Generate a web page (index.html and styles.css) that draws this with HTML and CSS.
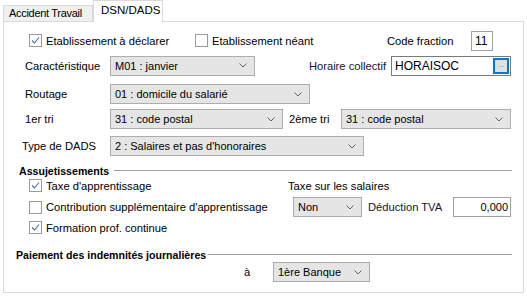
FILE: index.html
```html
<!DOCTYPE html>
<html lang="fr">
<head>
    <meta charset="UTF-8">
    <title>DSN/DADS</title>
    <link rel="stylesheet" href="styles.css">
</head>
<body>
    <div class="onglets">
        <div class="onglet">Accident Travail</div>
        <div class="onglet actif">DSN/DADS</div>
    </div>
    <div class="panneau">
        <div class="ligne l1">
            <div class="coche w166">
                <svg class="case" viewBox="0 0 13 13"><rect x="0.5" y="0.5" width="12" height="12" fill="#fff" stroke="#9a9a9a"/><path d="M3 6.5 L5.5 9 L10 3.5" fill="none" stroke="#3f6fb3" stroke-width="1.1"/></svg>
                <span>Etablissement à déclarer</span>
            </div>
            <div class="coche w192">
                <svg class="case" viewBox="0 0 13 13"><rect x="0.5" y="0.5" width="12" height="12" fill="#fff" stroke="#9a9a9a"/></svg>
                <span>Etablissement néant</span>
            </div>
            <div class="lib w84">Code fraction</div>
            <div class="champ fraction">11</div>
        </div>

        <div class="ligne l2">
            <div class="lib w85">Caractéristique</div>
            <div class="liste w145"><span>M01 : janvier</span><svg viewBox="0 0 8 5"><path d="M0.5 0.5 L4 4 L7.5 0.5" fill="none" stroke="#666"/></svg></div>
            <div class="lib droite w136 sombre">Horaire collectif</div>
            <div class="champ horaire"><span>HORAISOC</span><div class="btn-pts">...</div></div>
        </div>

        <div class="ligne l3">
            <div class="lib w85">Routage</div>
            <div class="liste w200"><span>01 : domicile du salarié</span><svg viewBox="0 0 8 5"><path d="M0.5 0.5 L4 4 L7.5 0.5" fill="none" stroke="#666"/></svg></div>
        </div>

        <div class="ligne l4">
            <div class="lib w85">1er tri</div>
            <div class="liste w173"><span>31 : code postal</span><svg viewBox="0 0 8 5"><path d="M0.5 0.5 L4 4 L7.5 0.5" fill="none" stroke="#666"/></svg></div>
            <div class="lib tri2">2ème tri</div>
            <div class="liste w170"><span>31 : code postal</span><svg viewBox="0 0 8 5"><path d="M0.5 0.5 L4 4 L7.5 0.5" fill="none" stroke="#666"/></svg></div>
        </div>

        <div class="ligne l5">
            <div class="lib w88">Type de DADS</div>
            <div class="liste w254"><span>2 : Salaires et pas d'honoraires</span><svg viewBox="0 0 8 5"><path d="M0.5 0.5 L4 4 L7.5 0.5" fill="none" stroke="#666"/></svg></div>
        </div>

        <div class="groupe g1">
            <span>Assujetissements</span>
            <div class="trait"></div>
        </div>

        <div class="ligne a1">
            <div class="coche w259">
                <svg class="case" viewBox="0 0 13 13"><rect x="0.5" y="0.5" width="12" height="12" fill="#fff" stroke="#9a9a9a"/><path d="M3 6.5 L5.5 9 L10 3.5" fill="none" stroke="#3f6fb3" stroke-width="1.1"/></svg>
                <span>Taxe d'apprentissage</span>
            </div>
            <div class="lib">Taxe sur les salaires</div>
        </div>

        <div class="ligne a2">
            <div class="coche w264">
                <svg class="case" viewBox="0 0 13 13"><rect x="0.5" y="0.5" width="12" height="12" fill="#fff" stroke="#9a9a9a"/></svg>
                <span>Contribution supplémentaire d'apprentissage</span>
            </div>
            <div class="liste w69"><span>Non</span><svg viewBox="0 0 8 5"><path d="M0.5 0.5 L4 4 L7.5 0.5" fill="none" stroke="#666"/></svg></div>
            <div class="lib tva sombre">Déduction TVA</div>
            <div class="champ montant">0,000</div>
        </div>

        <div class="ligne a3">
            <div class="coche">
                <svg class="case" viewBox="0 0 13 13"><rect x="0.5" y="0.5" width="12" height="12" fill="#fff" stroke="#9a9a9a"/><path d="M3 6.5 L5.5 9 L10 3.5" fill="none" stroke="#3f6fb3" stroke-width="1.1"/></svg>
                <span>Formation prof. continue</span>
            </div>
        </div>

        <div class="groupe g2">
            <span>Paiement des indemnités journalières</span>
            <div class="trait"></div>
        </div>

        <div class="ligne p1">
            <div class="lib w29">à</div>
            <div class="liste w97"><span>1ère Banque</span><svg viewBox="0 0 8 5"><path d="M0.5 0.5 L4 4 L7.5 0.5" fill="none" stroke="#666"/></svg></div>
        </div>
    </div>
</body>
</html>
```

FILE: styles.css
```css
* {
    margin: 0;
    padding: 0;
    box-sizing: border-box;
}
body {
    font-family: 'Liberation Sans', Arial, sans-serif;
    font-size: 11.2px;
    color: #000;
    background-color: #fff;
    width: 527px;
    height: 296px;
    overflow: hidden;
}

/* Onglets */
.onglets {
    display: flex;
    align-items: flex-end;
    height: 21px;
    padding-left: 3px;
}
.onglet {
    width: 90px;
    height: 16px;
    padding-left: 5px;
    line-height: 15px;
    font-size: 11px;
    letter-spacing: -0.3px;
    white-space: nowrap;
    background-color: #f0f0f0;
    border: 1px solid #d9d9d9;
    border-bottom: none;
}
.onglet.actif {
    width: 70px;
    height: 22px;
    margin-bottom: -1px;
    padding-left: 7px;
    line-height: 19px;
    font-size: 11.5px;
    letter-spacing: 0;
    background-color: #fff;
    position: relative;
    z-index: 1;
}

/* Panneau */
.panneau {
    margin-left: 3px;
    width: 521px;
    height: 272px;
    border: 1px solid #d9d9d9;
    background-color: #fff;
}
.ligne {
    display: flex;
    align-items: center;
}
.l1 { margin-top: 8px; height: 21px; padding-left: 25px; }
.l2 { margin-top: 4px; height: 21px; padding-left: 21px; }
.l3 { margin-top: 8px; height: 20px; padding-left: 21px; }
.l4 { margin-top: 5px; height: 20px; padding-left: 21px; }
.l5 { margin-top: 7px; height: 20px; padding-left: 18px; }
.a1 { height: 17px; padding-left: 25px; }
.a2 { margin-top: 3px; height: 20px; padding-left: 25px; }
.a3 { margin-top: 1px; height: 19px; padding-left: 25px; }
.p1 { margin-top: 1px; height: 20px; padding-left: 240px; }

.lib { white-space: nowrap; }
.lib.droite { text-align: right; padding-right: 5px; }
.sombre { color: #15152e; }
.tri2 { width: 58px; padding-left: 6px; }
.tva { width: 91px; padding-left: 6px; }

.w29 { width: 29px; }
.w69 { width: 69px; }
.w84 { width: 84px; }
.w85 { width: 85px; }
.w88 { width: 88px; }
.w97 { width: 97px; }
.w136 { width: 136px; }
.w145 { width: 145px; }
.w166 { width: 166px; }
.w170 { width: 170px; }
.w173 { width: 173px; }
.w192 { width: 192px; }
.w200 { width: 200px; }
.w254 { width: 254px; }
.w259 { width: 259px; }
.w264 { width: 264px; }

/* Cases a cocher */
.coche {
    display: flex;
    align-items: center;
    gap: 4px;
    white-space: nowrap;
}
.case {
    width: 13px;
    height: 13px;
    flex: none;
}

/* Listes deroulantes */
.liste {
    height: 20px;
    display: flex;
    align-items: center;
    justify-content: space-between;
    padding: 0 7px 0 4px;
    font-size: 11px;
    background-color: #e5e5e5;
    border: 1px solid #adadad;
    white-space: nowrap;
    flex: none;
}
.liste svg {
    width: 8px;
    height: 5px;
}

/* Champs */
.champ {
    height: 20px;
    display: flex;
    align-items: center;
    background-color: #fff;
    border: 1px solid #a0a0a0;
    font-size: 12px;
    flex: none;
}
.fraction {
    width: 22px;
    padding-left: 3px;
}
.horaire {
    width: 120px;
    justify-content: space-between;
    padding: 0 1px 0 3px;
    border-color: #7a7a7a;
}
.btn-pts {
    width: 16px;
    height: 16px;
    border: 2px solid #0078d7;
    background-color: #e1e1e1;
    color: #888;
    font-size: 8px;
    line-height: 10px;
    text-align: center;
}
.montant {
    width: 58px;
    justify-content: flex-end;
    padding-right: 2px;
    font-size: 11px;
}

/* Groupes */
.groupe {
    display: flex;
    align-items: center;
    height: 13px;
    font-weight: bold;
    font-size: 10.6px;
    padding-right: 11px;
    white-space: nowrap;
}
.g1 { margin-top: 8px; padding-left: 15px; }
.g2 { margin-top: 11px; padding-left: 12px; }
.trait {
    flex: 1;
    height: 1px;
    margin-left: 5px;
    background-color: #a0a0a0;
}
.g2 .trait { margin-left: 2px; }
```
